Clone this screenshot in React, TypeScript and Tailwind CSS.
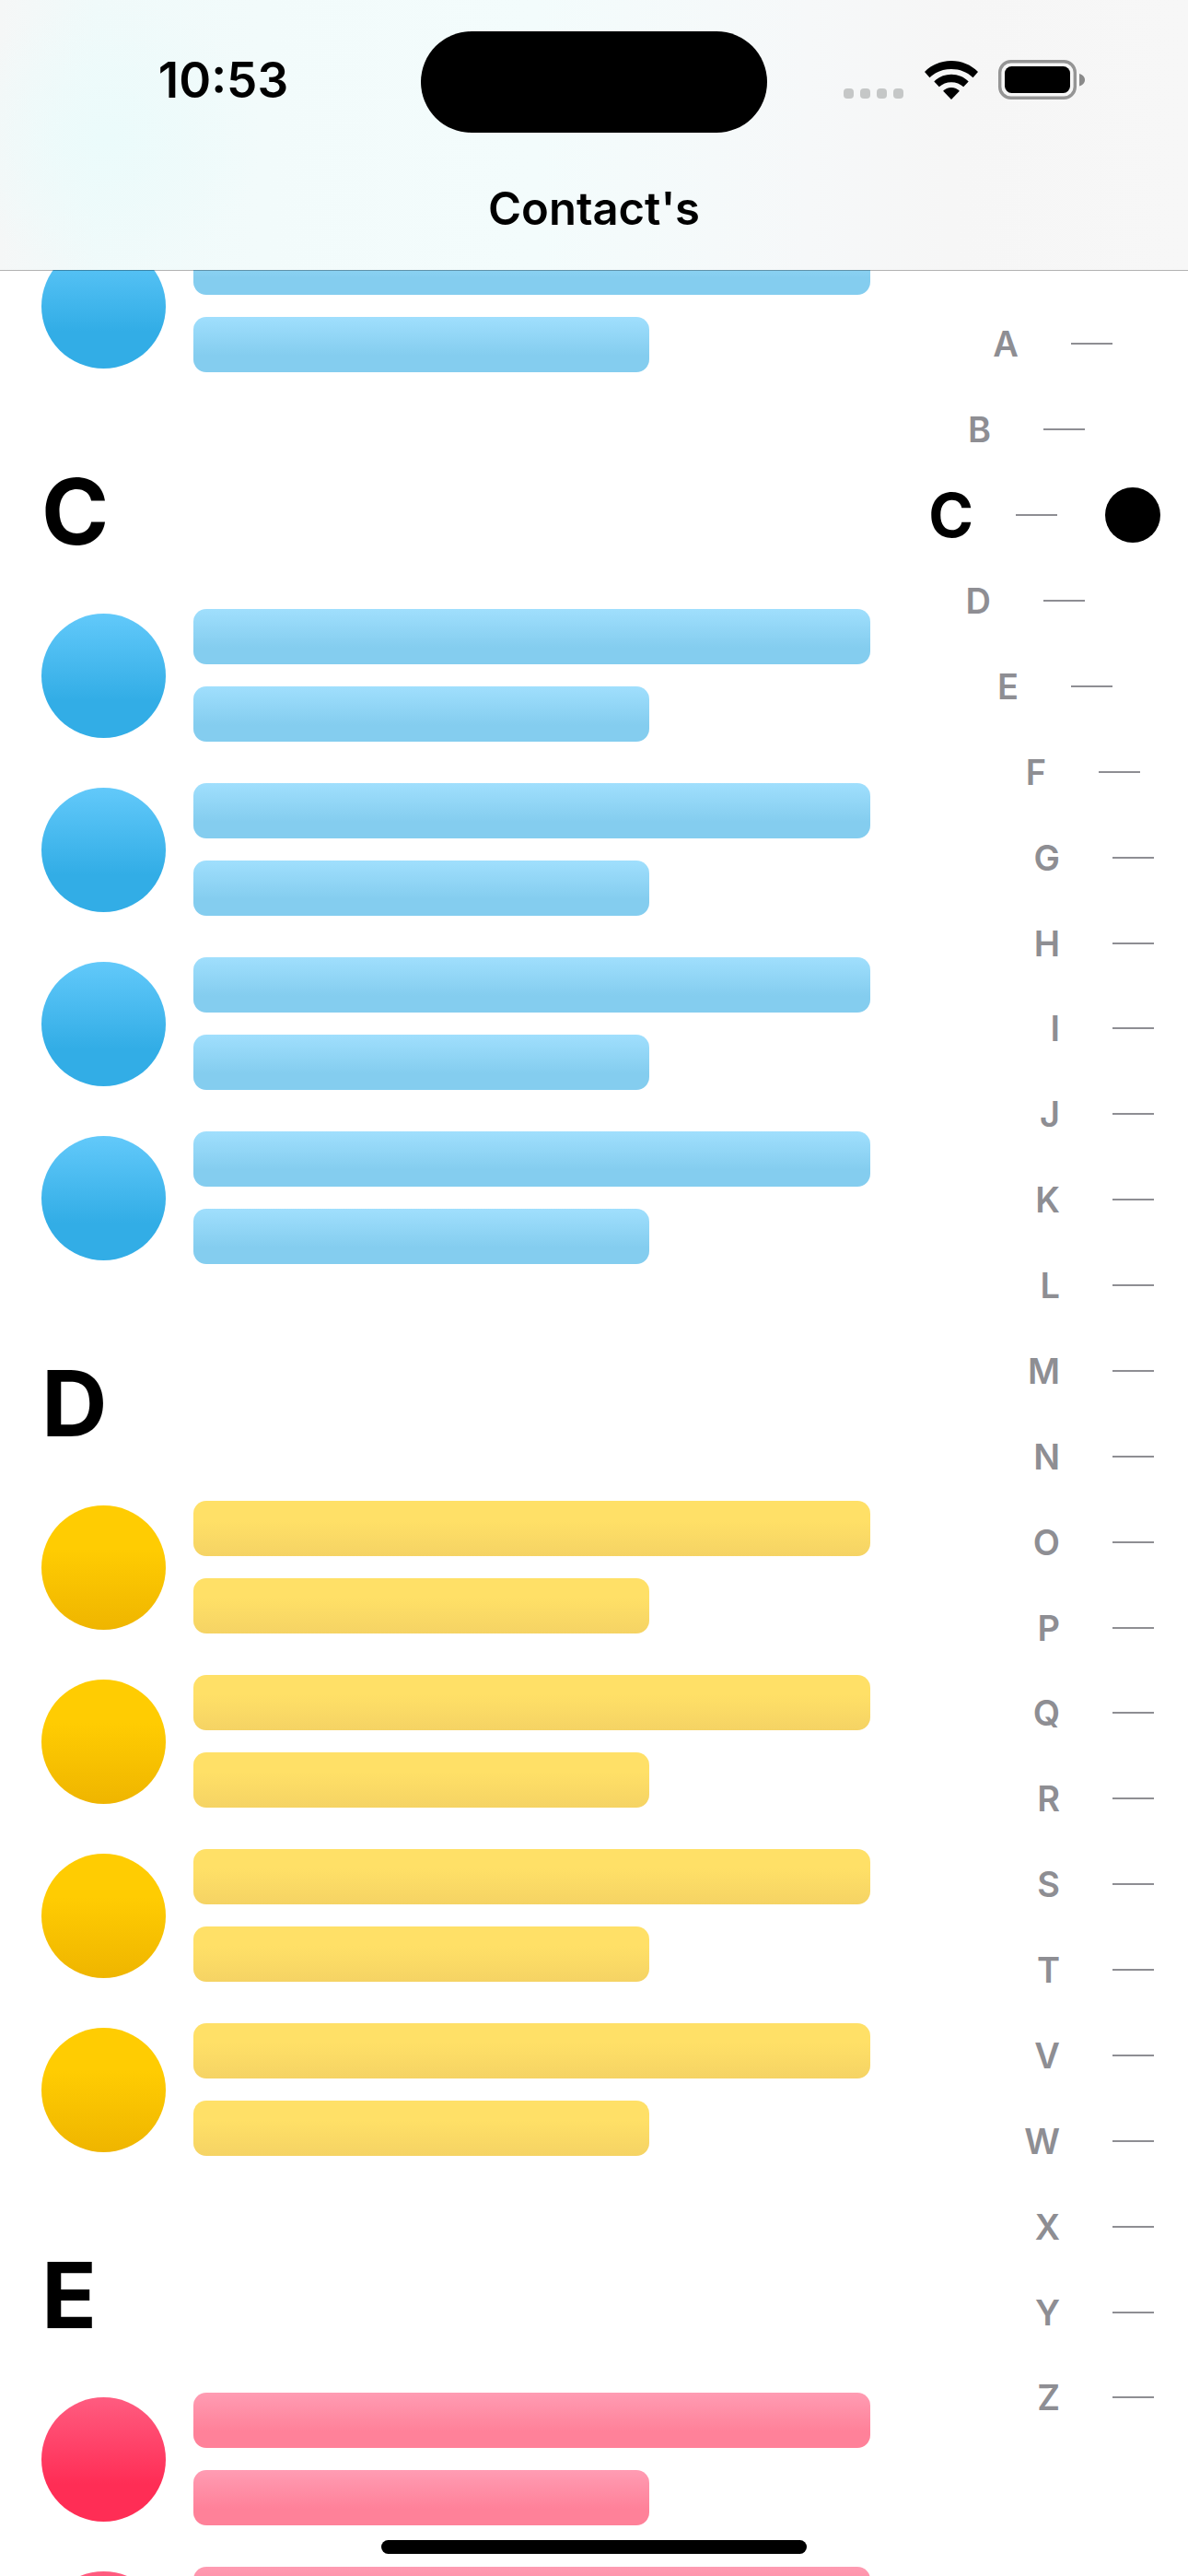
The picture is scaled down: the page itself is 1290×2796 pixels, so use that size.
type Tone = 'blue' | 'yellow' | 'pink'

const AVATAR: Record<Tone, string> = {
  blue: 'bg-[linear-gradient(to_top,#32ade6_0%,#32ade6_30%,#62c9fa_100%)]',
  yellow: 'bg-[linear-gradient(to_top,#efb500_0%,#ffcc02_65%,#ffcc02_100%)]',
  pink: 'bg-[linear-gradient(to_top,#ff2d55_0%,#ff2d55_30%,#ff5c80_100%)]',
}

const BAR: Record<Tone, string> = {
  blue: 'bg-[linear-gradient(to_top,#84cdef_0%,#84cdef_30%,#a0dffd_100%)]',
  yellow: 'bg-[linear-gradient(to_top,#f5d364_0%,#ffe067_65%,#ffe067_100%)]',
  pink: 'bg-[linear-gradient(to_top,#ff8199_0%,#ff8199_30%,#ff9cb3_100%)]',
}

const SECTIONS: { letter: string; tone: Tone; rows: number }[] = [
  { letter: 'C', tone: 'blue', rows: 4 },
  { letter: 'D', tone: 'yellow', rows: 4 },
  { letter: 'E', tone: 'pink', rows: 4 },
]

const LETTERS = 'ABCDEFGHIJKLMNOPQRSTVWXYZ'.split('')
const ACTIVE = 'C'

// Trailing space of an index row by its distance from the active letter.
const SHIFT = ['pr-[30px]', 'pr-[112px]', 'pr-[82px]', 'pr-[52px]']

function ContactRow({ tone }: { tone: Tone }) {
  return (
    <li className="flex items-center gap-[30px]">
      <div className={`size-[135px] shrink-0 rounded-full ${AVATAR[tone]}`} />
      <div className="flex flex-1 flex-col gap-6">
        <div className={`h-[60px] rounded-[14px] ${BAR[tone]}`} />
        <div className={`mr-[240px] h-[60px] rounded-[14px] ${BAR[tone]}`} />
      </div>
    </li>
  )
}

function Section({ letter, tone, rows }: { letter: string; tone: Tone; rows: number }) {
  return (
    <section>
      <h2 className="mt-[91px] mb-[46px] text-[99px] leading-[120px] font-bold">{letter}</h2>
      <ul className="flex flex-col gap-[45px]">
        {Array.from({ length: rows }, (_, i) => (
          <ContactRow key={i} tone={tone} />
        ))}
      </ul>
    </section>
  )
}

function IndexRow({ letter, distance }: { letter: string; distance: number }) {
  const active = distance === 0
  return (
    <button
      type="button"
      aria-current={active}
      className={`flex min-h-0 flex-1 items-center justify-end ${SHIFT[distance] ?? 'pr-[37px]'}`}
    >
      <span
        className={
          active
            ? 'mr-[46px] text-[66px] leading-none font-bold text-black'
            : 'mr-[57px] text-[38px] leading-none font-semibold text-[#8e8e93]'
        }
      >
        {letter}
      </span>
      <span className="h-[2px] w-[45px] bg-[#8e8e93]" />
      {active && <span className="ml-[52px] size-[60px] rounded-full bg-black" />}
    </button>
  )
}

function Wifi() {
  return (
    <svg viewBox="0 0 58 42" className="h-[42px] w-[58px]" aria-label="Wi-Fi">
      <path d="M29 0C40.200 0 50.500 4.400 58 12L52.500 18.300C46.500 12.300 38.200 9 29 9S11.500 12.300 5.500 18.300L0 12C7.500 4.400 17.800 0 29 0Z" />
      <path d="M29 14.800C36.200 14.800 42.800 17.600 47.700 22.400L42.200 28.300C38.700 25 34 23.200 29 23.200S19.300 25 15.800 28.300L10.300 22.400C15.200 17.600 21.800 14.800 29 14.800Z" />
      <path d="M29 29C32.600 29 35.600 30.400 37.900 32.800L29 42L20.100 32.800C22.400 30.400 25.400 29 29 29Z" />
    </svg>
  )
}

function Battery() {
  return (
    <svg viewBox="0 0 95 43" className="h-[43px] w-[95px]" aria-label="Battery">
      <rect x="1.700" y="1.700" width="81.600" height="39.600" rx="12" fill="none" stroke="#959595" strokeWidth="3.400" />
      <rect x="7" y="7" width="71" height="29" rx="7.500" />
      <path d="M88 15C91.500 16 94 18.500 94 21.700S91.500 27.500 88 28.500Z" fill="#8a8a8a" />
    </svg>
  )
}

function StatusBar() {
  return (
    <div className="grid grid-cols-[1fr_376px_1fr] items-center pt-[34px]">
      <time className="pr-7 pb-1 pl-14 text-center text-[53px] leading-[64px] font-semibold">10:53</time>
      <div className="h-[110px] rounded-full bg-black" />
      <div className="flex items-center justify-end pr-[111px] pb-[5px]">
        <div className="mr-[23px] flex gap-[7px] self-end pb-px">
          {[0, 1, 2, 3].map((i) => (
            <span key={i} className="size-[11px] rounded-[4px] bg-[#c5c7c7]" />
          ))}
        </div>
        <Wifi />
        <div className="ml-[22px]">
          <Battery />
        </div>
      </div>
    </div>
  )
}

export default function App() {
  const activeIndex = LETTERS.indexOf(ACTIVE)
  return (
    <div className="flex h-screen flex-col overflow-hidden bg-white font-['Inter',sans-serif] text-black">
      <header className="relative z-10 flex h-[293px] shrink-0 flex-col bg-[radial-gradient(ellipse_170px_150px_at_115px_150px,#ebfbfb,transparent),linear-gradient(to_right,#f5f7f7,#f0fafa_8%,#f2fbfb_22%,#f3fcfc_45%,#f6f8f9_68%,#f6f6f6_80%,#f7f7f7)] shadow-[0_1px_0_rgba(0,0,0,0.3)]">
        <StatusBar />
        <h1 className="mt-[53px] text-center text-[49px] leading-[60px] font-semibold">Contact's</h1>
      </header>
      <div className="flex min-h-0 flex-1">
        <main className="-mt-[33px] flex-1 pl-[45px]">
          <ul>
            <ContactRow tone="blue" />
          </ul>
          {SECTIONS.map((s) => (
            <Section key={s.letter} {...s} />
          ))}
        </main>
        <nav aria-label="Alphabet" className="flex w-[345px] flex-col pt-[34px] pb-[147px]">
          {LETTERS.map((l, i) => (
            <IndexRow key={l} letter={l} distance={Math.abs(i - activeIndex)} />
          ))}
        </nav>
      </div>
      <div className="fixed bottom-6 left-1/2 z-20 h-[15px] w-[462px] -translate-x-1/2 rounded-full bg-black" />
    </div>
  )
}
